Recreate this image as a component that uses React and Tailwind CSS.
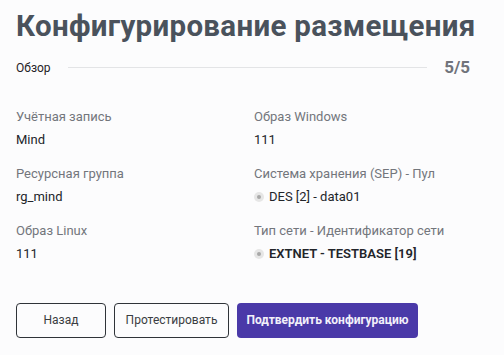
const left = [
  { label: 'Учётная запись', value: 'Mind' },
  { label: 'Ресурсная группа', value: 'rg_mind' },
  { label: 'Образ Linux', value: '111' },
];

const right = [
  { label: 'Образ Windows', value: '111' },
  { label: 'Система хранения (SEP) - Пул', value: 'DES [2] - data01', dot: true },
  { label: 'Тип сети - Идентификатор сети', value: 'EXTNET - TESTBASE [19]', dot: true, bold: true },
];

function Dot() {
  return (
    <span className="w-[10px] h-[10px] rounded-full bg-[#e6e6e6] flex items-center justify-center mr-[5px]">
      <span className="w-[4px] h-[4px] rounded-full bg-[#a8a8a8]" />
    </span>
  );
}

function Field({ label, value, dot, bold }) {
  return (
    <div className="flex flex-col">
      <span className="text-[13px] leading-[16px] text-[#73767c]">{label}</span>
      <span className={`mt-[7px] text-[13px] leading-[16px] text-[#22252a] flex items-center ${bold ? 'font-semibold' : ''}`}>
        {dot && <Dot />}
        {value}
      </span>
    </div>
  );
}

export default function App() {
  return (
    <div className="w-[504px] h-[355px] bg-[#fcfcfd] px-4 pt-[7px]" style={{ fontFamily: 'Roboto, "Noto Sans", sans-serif' }}>
      {/* Title */}
      <h1 className="text-[29.5px] leading-[38px] font-bold text-[#4a525c] tracking-[0.3px] whitespace-nowrap">
        Конфигурирование размещения
      </h1>

      {/* Step */}
      <div className="flex items-center mt-[10px] pr-[18px]">
        <span className="text-[12px] text-[#1f2226]">Обзор</span>
        <div className="flex-1 h-px bg-[#e3e4e6] ml-[17px] mr-[17px]" />
        <span className="text-[17px] font-bold text-[#70737b]">5/5</span>
      </div>

      {/* Summary */}
      <div className="grid grid-cols-2 mt-[28px] gap-x-[4px]">
        <div className="flex flex-col gap-[18px]">
          {left.map((f) => <Field key={f.label} {...f} />)}
        </div>
        <div className="flex flex-col gap-[18px]">
          {right.map((f) => <Field key={f.label} {...f} />)}
        </div>
      </div>

      {/* Actions */}
      <div className="flex gap-[8px] mt-[41px]">
        <button className="w-[90px] h-[35px] border border-[#2f3338] rounded-[4px] text-[12px] text-[#3a3d42]">
          Назад
        </button>
        <button className="w-[115px] h-[35px] border border-[#2f3338] rounded-[4px] text-[12px] text-[#3a3d42]">
          Протестировать
        </button>
        <button className="w-[181px] h-[35px] rounded-[4px] bg-[#4a39a8] text-[12px] font-bold text-[#f2f0fa]">
          Подтвердить конфигурацию
        </button>
      </div>
    </div>
  );
}
